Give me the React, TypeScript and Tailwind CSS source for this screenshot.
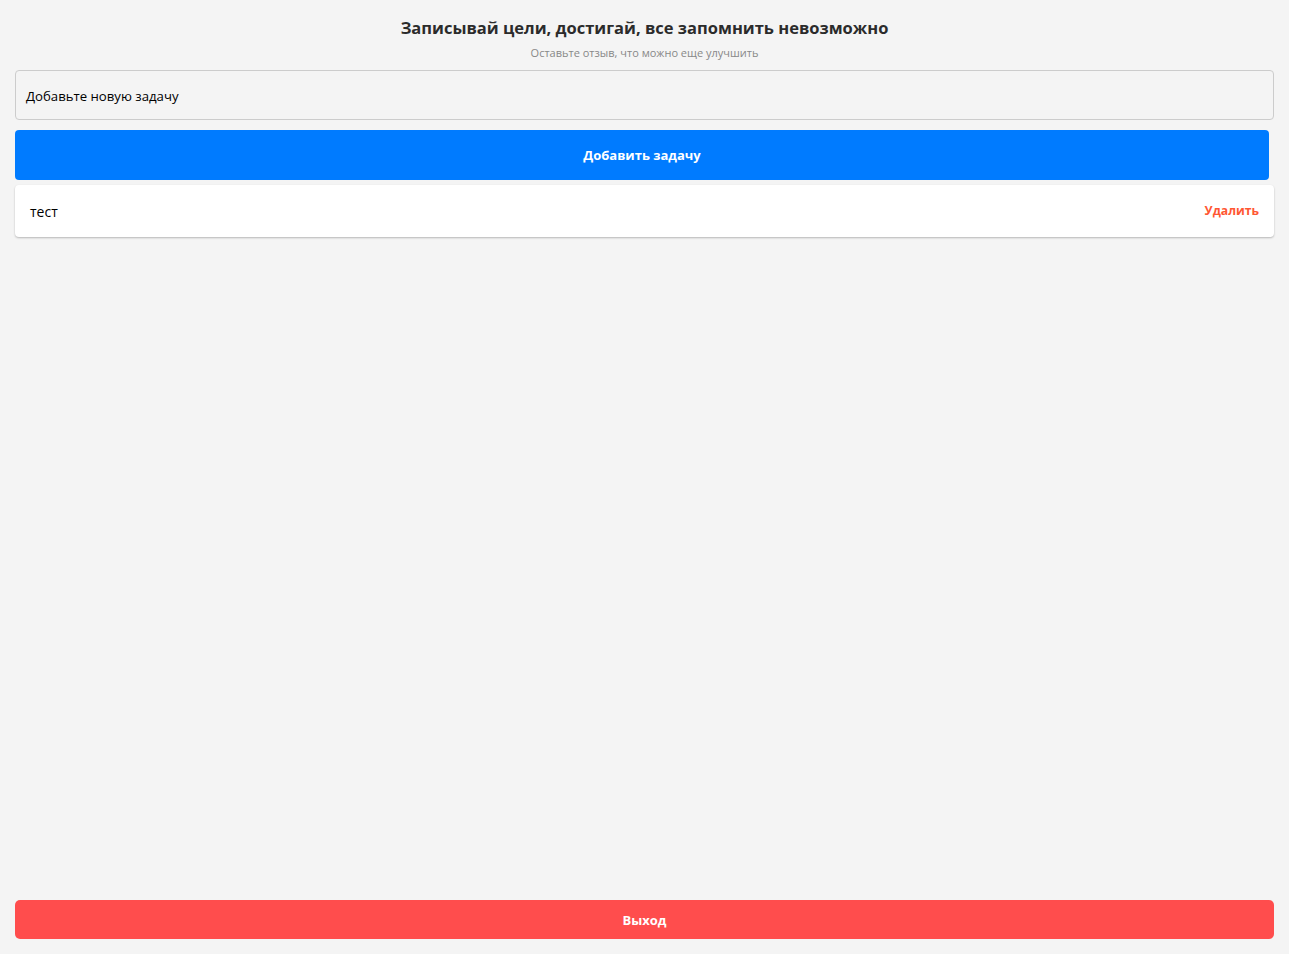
export default function App() {
  return (
    <div
      className="min-h-screen bg-[#f4f4f4] flex flex-col px-[15px]"
      style={{ fontFamily: '"Open Sans", "Noto Sans", sans-serif' }}
    >
      <h1 className="mt-[16px] text-center text-[16.5px] leading-[24px] font-bold text-[#2b2b2b]">
        Записывай цели, достигай, все запомнить невозможно
      </h1>
      <p className="mt-[6px] text-center text-[11px] leading-[14px] text-[#888]">
        Оставьте отзыв, что можно еще улучшить
      </p>
      <div className="mt-[10px] w-[1259px] h-[50px] border border-[#ccc] rounded-[4px] bg-[#f4f4f4] flex items-center pt-[3px] px-[10px] text-[13.2px] text-black">
        Добавьте новую задачу
      </div>
      <button className="mt-[10px] w-[1254px] h-[50px] pt-[2px] rounded-[4px] bg-[#007bff] text-white text-[13px] font-bold">
        Добавить задачу
      </button>
      <div className="mt-[5px] w-[1259px] h-[52px] bg-white rounded-[4px] shadow-[0_1px_2px_rgba(0,0,0,0.25)] flex items-center justify-between px-[15px]">
        <span className="text-[14px] text-black">тест</span>
        <span className="text-[12.2px] font-bold text-[#ff5733]">Удалить</span>
      </div>
      <button className="mt-auto mb-[15px] w-[1259px] h-[39px] pt-[3px] rounded-[5px] bg-[#ff4d4d] text-white text-[13px] font-bold">
        Выход
      </button>
    </div>
  );
}
